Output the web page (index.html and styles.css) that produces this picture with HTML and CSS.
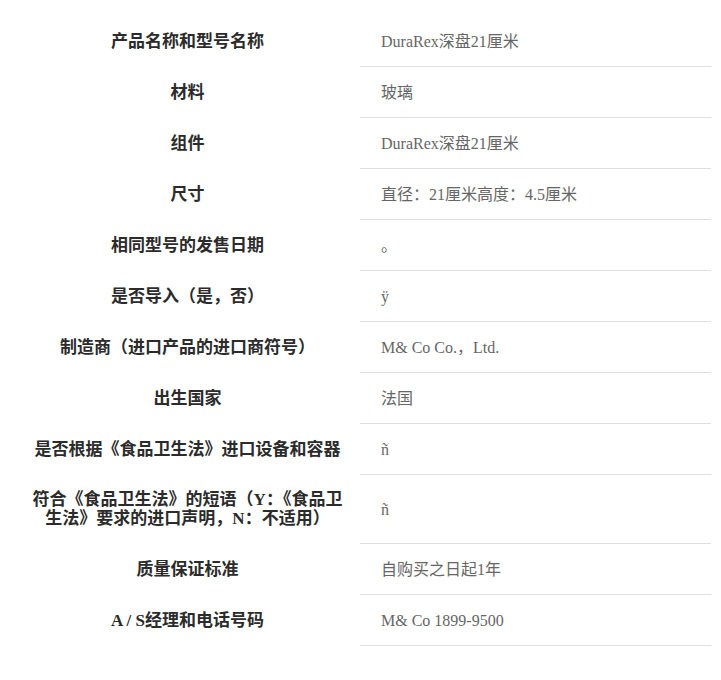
FILE: index.html
```html
<!DOCTYPE html>
<html lang="zh-CN">
<head>
    <meta charset="UTF-8">
    <meta name="viewport" content="width=device-width, initial-scale=1.0">
    <title>DuraRex深盘21厘米 - 商品信息</title>
    <link rel="stylesheet" href="styles.css">
</head>
<body>
    <table class="spec-table">
        <tr>
            <th>产品名称和型号名称</th>
            <td>DuraRex深盘21厘米</td>
        </tr>
        <tr>
            <th>材料</th>
            <td>玻璃</td>
        </tr>
        <tr>
            <th>组件</th>
            <td>DuraRex深盘21厘米</td>
        </tr>
        <tr>
            <th>尺寸</th>
            <td>直径：21厘米高度：4.5厘米</td>
        </tr>
        <tr>
            <th>相同型号的发售日期</th>
            <td>。</td>
        </tr>
        <tr>
            <th>是否导入（是，否）</th>
            <td>ÿ</td>
        </tr>
        <tr>
            <th>制造商（进口产品的进口商符号）</th>
            <td>M&amp; Co Co.，Ltd.</td>
        </tr>
        <tr>
            <th>出生国家</th>
            <td>法国</td>
        </tr>
        <tr>
            <th>是否根据《食品卫生法》进口设备和容器</th>
            <td>ñ</td>
        </tr>
        <tr>
            <th>符合《食品卫生法》的短语（Y：《食品卫生法》要求的进口声明，N：不适用）</th>
            <td>ñ</td>
        </tr>
        <tr>
            <th>质量保证标准</th>
            <td>自购买之日起1年</td>
        </tr>
        <tr>
            <th>A / S经理和电话号码</th>
            <td>M&amp; Co 1899-9500</td>
        </tr>
    </table>
</body>
</html>
```

FILE: styles.css
```css
* {
    box-sizing: border-box;
    margin: 0;
    padding: 0;
}

body {
    font-family: "Liberation Serif", "Noto Sans CJK SC", serif;
    background-color: #fff;
    padding: 16px 10px 0 15px;
}

.spec-table {
    width: 696px;
    border-collapse: collapse;
    table-layout: fixed;
}

.spec-table th {
    width: 345px;
    padding: 15.5px 12px;
    font-size: 17px;
    font-weight: bold;
    line-height: 19px;
    color: #2b2b2b;
    text-align: center;
    vertical-align: middle;
}

.spec-table td {
    padding: 15.5px 10px 15.5px 21px;
    font-size: 16px;
    line-height: 19px;
    color: #666;
    text-align: left;
    vertical-align: middle;
    border-bottom: 1px solid #dedede;
}
```
